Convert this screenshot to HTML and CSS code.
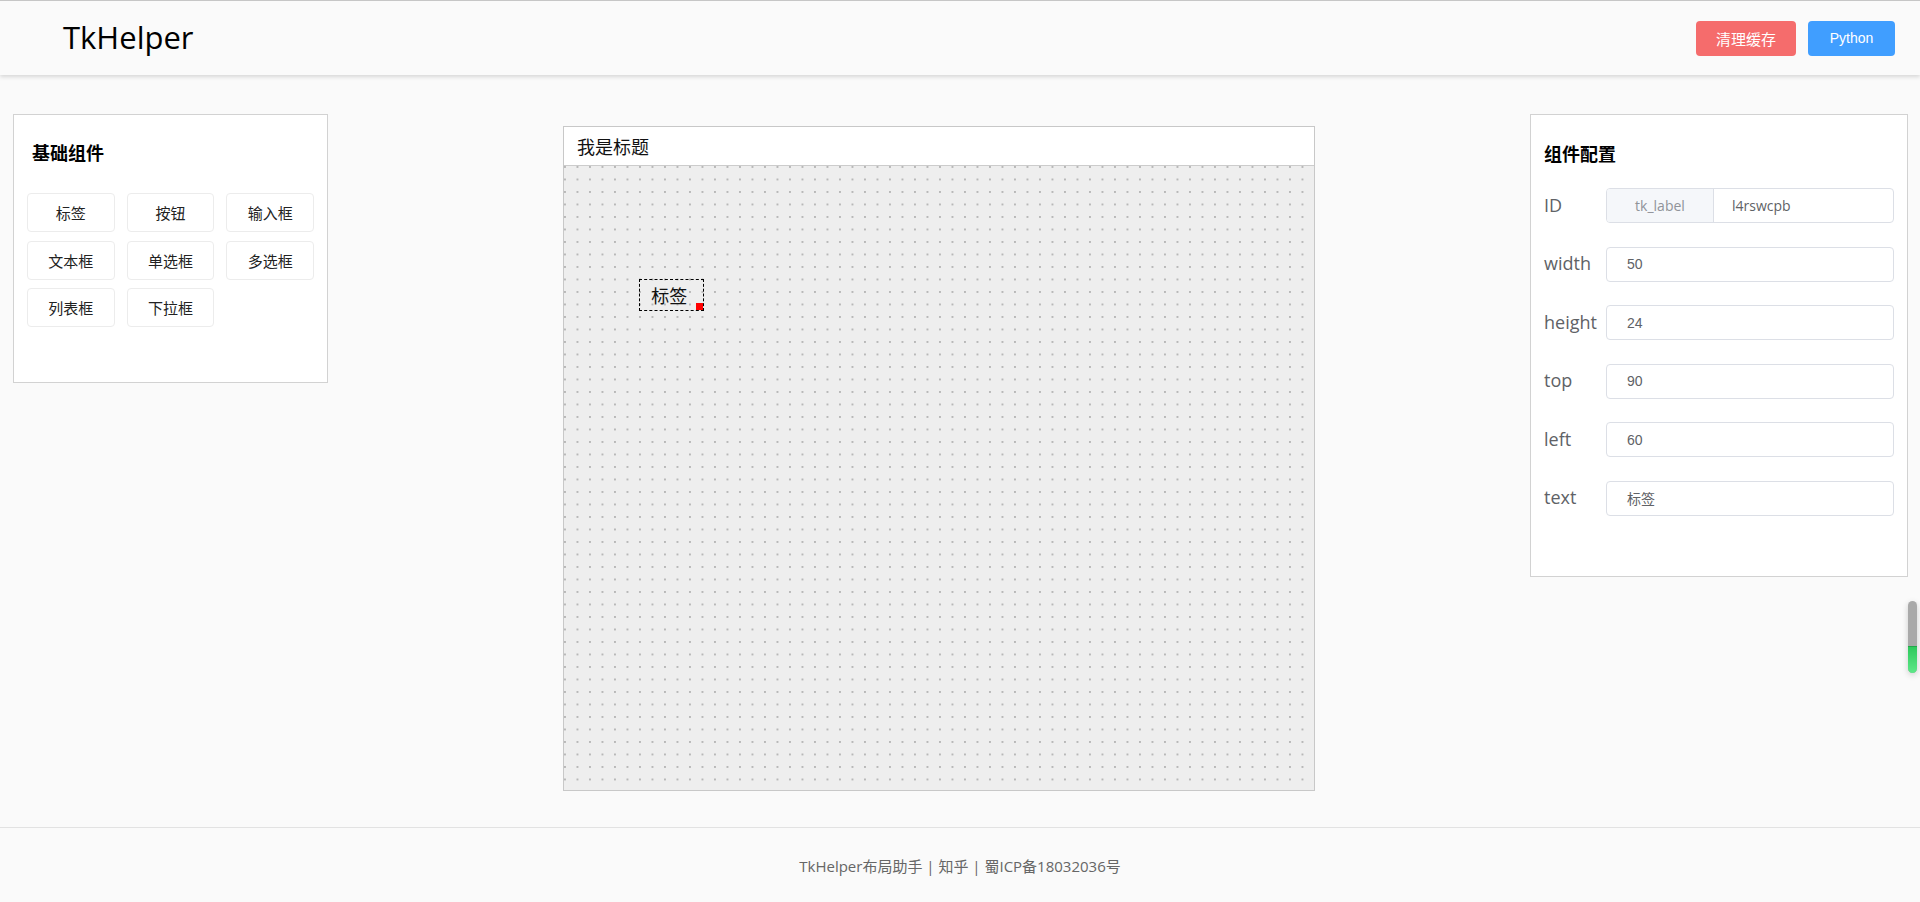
FILE: index.html
```html
<!DOCTYPE html>
<html lang="zh-CN">
<head>
<meta charset="utf-8">
<title>TkHelper</title>
<link rel="stylesheet" href="styles.css">
</head>
<body>
<header class="header">
  <div class="logo">TkHelper</div>
  <div class="actions">
    <button class="btn btn-danger">清理缓存</button>
    <button class="btn btn-primary">Python</button>
  </div>
</header>
<main class="main">
  <section class="panel panel-left">
    <h3 class="panel-title">基础组件</h3>
    <div class="widgets">
      <div class="widget">标签</div>
      <div class="widget">按钮</div>
      <div class="widget">输入框</div>
      <div class="widget">文本框</div>
      <div class="widget">单选框</div>
      <div class="widget">多选框</div>
      <div class="widget">列表框</div>
      <div class="widget">下拉框</div>
    </div>
  </section>
  <section class="stage">
    <div class="window">
      <div class="window-title">我是标题</div>
      <div class="window-body">
        <div class="tk-label">标签<span class="handle"></span></div>
      </div>
    </div>
  </section>
  <section class="panel panel-right">
    <h3 class="panel-title">组件配置</h3>
    <div class="form">
      <div class="row"><span class="label">ID</span><div class="input group"><span class="prepend">tk_label</span><span class="value">l4rswcpb</span></div></div>
      <div class="row"><span class="label">width</span><div class="input">50</div></div>
      <div class="row"><span class="label">height</span><div class="input">24</div></div>
      <div class="row"><span class="label">top</span><div class="input">90</div></div>
      <div class="row"><span class="label">left</span><div class="input">60</div></div>
      <div class="row"><span class="label">text</span><div class="input">标签</div></div>
    </div>
  </section>
</main>
<footer class="footer">TkHelper布局助手 | 知乎 | 蜀ICP备18032036号</footer>
<div class="float-bar"><span class="float-fill"></span></div>
</body>
</html>
```

FILE: styles.css
```css
* { box-sizing: border-box; }
html, body { margin: 0; padding: 0; }
body {
  background: #fafafa;
  font-family: "Open Sans", "Noto Sans CJK SC", sans-serif;
  color: #000;
  width: 1920px;
  height: 902px;
  overflow: hidden;
}
.header {
  height: 75px;
  border-top: 1px solid #c6c6c6;
  background: #fafafa;
  display: flex;
  align-items: center;
  justify-content: space-between;
  padding: 0 25px 0 63px;
  box-shadow: 0 2px 4px rgba(0,0,0,0.14);
  position: relative;
  z-index: 1;
}
.logo {
  font-size: 31px;
  line-height: 1;
  color: #000;
  margin-top: -1px;
}
.actions { display: flex; gap: 12px; }
.btn {
  height: 35px;
  border: none;
  border-radius: 4px;
  color: #fff;
  font-family: "Liberation Sans", "Noto Sans CJK SC", sans-serif;
  font-size: 14px;
  padding: 0;
  cursor: pointer;
}
.btn-danger { background: #f56c6c; width: 100px; font-size: 15px; }
.btn-primary { background: #409eff; width: 87px; }

.main {
  height: 752px;
  display: flex;
  align-items: flex-start;
  padding: 39px 12px 0 13px;
}
.panel {
  background: #fff;
  border: 1px solid #d2d2d2;
}
.panel-title {
  margin: 0;
  font-size: 18px;
  line-height: 22px;
  font-weight: 700;
  font-family: "Noto Sans CJK SC", sans-serif;
  color: #000;
}
.panel-left {
  width: 315px;
  height: 269px;
  padding: 26px 13px 0;
}
.panel-left .panel-title { padding-left: 5px; margin-bottom: 30px; }
.widgets {
  display: grid;
  grid-template-columns: repeat(3, 1fr);
  column-gap: 12px;
  row-gap: 8.5px;
}
.widget {
  height: 39px;
  border: 1px solid #ececec;
  border-radius: 4px;
  display: flex;
  align-items: center;
  justify-content: center;
  font-family: "Noto Sans CJK SC", sans-serif;
  font-size: 15px;
  color: #222;
}
.stage { margin-left: 235px; margin-top: 12px; }
.window {
  width: 752px;
  height: 665px;
  border: 1px solid #c8c8c8;
  display: flex;
  flex-direction: column;
}
.window-title {
  height: 39px;
  background: #fff;
  border-bottom: 1px solid #cccccc;
  font-family: "Noto Sans CJK SC", sans-serif;
  font-size: 18px;
  line-height: 38px;
  padding-left: 13px;
  color: #111;
}
.window-body {
  flex: 1;
  position: relative;
  background-color: #eeeeee;
  background-image: radial-gradient(circle at 1px 1px, #b8b8b8 0.9px, transparent 1.3px);
  background-size: 12.5px 12.5px;
}
.tk-label {
  position: absolute;
  left: 75px;
  top: 112.5px;
  width: 64.5px;
  height: 32px;
  border: 1px dashed #000;
  font-family: "Noto Sans CJK SC", sans-serif;
  font-size: 18px;
  line-height: 30px;
  text-align: center;
  color: #111;
  padding-right: 4px;
}
.handle {
  position: absolute;
  right: 0;
  bottom: 0;
  width: 7px;
  height: 7px;
  background: #f00;
}
.panel-right {
  margin-left: auto;
  width: 378px;
  height: 463px;
  padding: 27px 13px 0;
}
.panel-right .panel-title { margin-bottom: 24px; }
.form { display: flex; flex-direction: column; gap: 23.5px; }
.row { display: flex; align-items: center; height: 35px; }
.label {
  width: 62px;
  font-size: 18px;
  color: #606266;
  font-family: "Open Sans", sans-serif;
  margin-top: -2px;
}
.input {
  flex: 1;
  height: 35px;
  border: 1px solid #dcdfe6;
  border-radius: 4px;
  background: #fff;
  display: flex;
  align-items: center;
  padding-left: 20px;
  font-family: "Liberation Sans", "Noto Sans CJK SC", sans-serif;
  font-size: 14px;
  color: #606266;
}
.input.group { padding-left: 0; overflow: hidden; }
.prepend {
  width: 107px;
  height: 100%;
  background: #f5f7fa;
  border-right: 1px solid #dcdfe6;
  color: #909399;
  display: flex;
  align-items: center;
  justify-content: center;
  font-family: "Open Sans", sans-serif;
}
.value { padding-left: 18px; font-family: "Open Sans", sans-serif; }
.footer {
  height: 75px;
  border-top: 1px solid #e2e2e2;
  display: flex;
  align-items: center;
  justify-content: center;
  font-size: 15px;
  color: #666;
  font-family: "Open Sans", "Noto Sans CJK SC", sans-serif;
}
.float-bar {
  position: fixed;
  left: 1908px;
  top: 601px;
  width: 9px;
  height: 72px;
  border-radius: 5px;
  background: #a9a9a9;
  box-shadow: 0 2px 6px rgba(0,0,0,0.18);
  overflow: hidden;
}
.float-fill {
  position: absolute;
  left: 0;
  right: 0;
  bottom: 0;
  height: 27px;
  background: linear-gradient(#2ec95c, #5ee889);
  border-top: 1px solid #22a84a;
}
```
